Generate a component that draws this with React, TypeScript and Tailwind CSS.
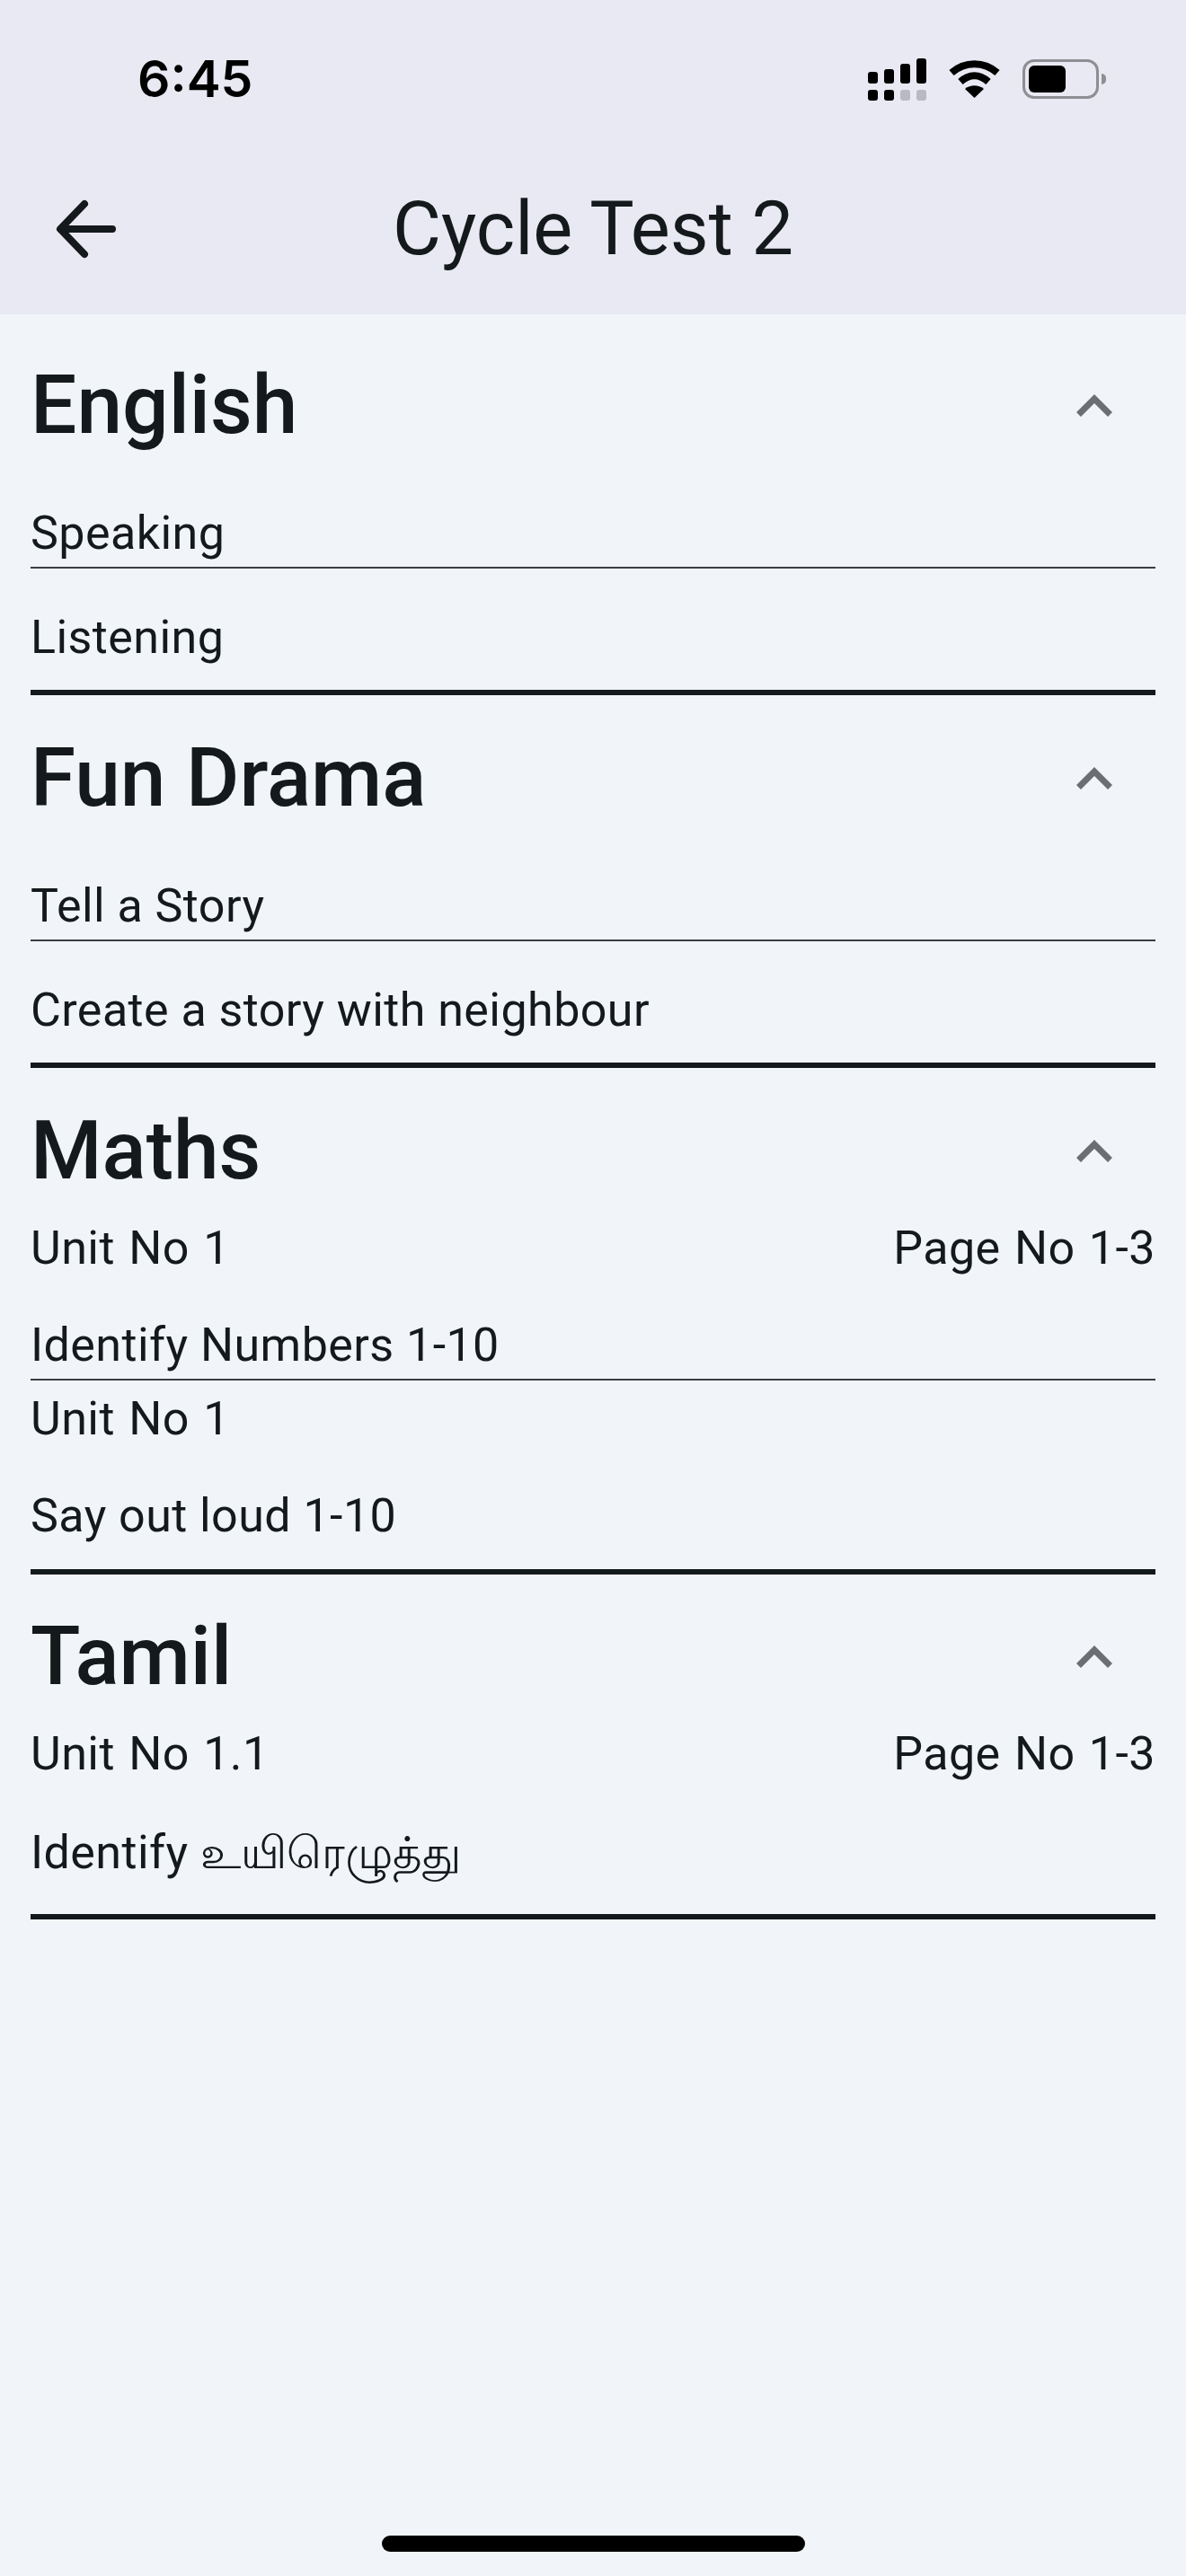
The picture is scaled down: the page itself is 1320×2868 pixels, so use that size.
import type { ReactNode } from "react";

const Chevron = () => (
  <svg width="40" height="25" viewBox="0 0 40 25" className="shrink-0">
    <path d="M2.5 22.5 L20 5 L37.5 22.5" fill="none" stroke="#6b6f72" strokeWidth="7" />
  </svg>
);

function Title({ text }: { text: string }) {
  return (
    <div className="flex items-center justify-between h-[112px] pr-[48px]">
      <h2 className="text-[91px] leading-[112px] font-medium text-[#14191c]">{text}</h2>
      <Chevron />
    </div>
  );
}

function UnitRow({ unit, page }: { unit: string; page?: string }) {
  return (
    <div className="flex justify-between text-[52px] leading-[64px] tracking-[0.44px] [word-spacing:2px] text-[#14191c]">
      <span>{unit}</span>
      {page && <span>{page}</span>}
    </div>
  );
}

function Row({ children, line }: { children: ReactNode; line?: boolean }) {
  return (
    <div className={line ? "border-b-2 border-[#3a3f42] pb-[5px]" : ""}>
      <div className="text-[52px] leading-[64px] tracking-[0.44px] text-[#14191c]">{children}</div>
    </div>
  );
}

function SignalIcon() {
  return (
    <svg width="65" height="47" viewBox="0 0 65 47">
      <rect x="0" y="15" width="11" height="13" rx="3" fill="#000" />
      <rect x="18" y="12" width="11" height="16" rx="3" fill="#000" />
      <rect x="36" y="6" width="11" height="22" rx="3" fill="#000" />
      <rect x="54" y="0" width="11" height="28" rx="3" fill="#000" />
      <rect x="0" y="35" width="11" height="12" rx="3" fill="#000" />
      <rect x="18" y="35" width="11" height="12" rx="3" fill="#000" />
      <rect x="36" y="35" width="11" height="12" rx="3" fill="#b9b9c3" />
      <rect x="54" y="35" width="11" height="12" rx="3" fill="#b9b9c3" />
    </svg>
  );
}

function WifiIcon() {
  return (
    <svg width="57" height="42" viewBox="0 0 57 42">
      <path d="M3 14 C18 1 39 1 54 14" fill="none" stroke="#000" strokeWidth="8" />
      <path d="M13 24 C23 15 34 15 44 24" fill="none" stroke="#000" strokeWidth="8" />
      <path d="M18 32 C24 27 33 27 39 32 L28.5 42 Z" fill="#000" />
    </svg>
  );
}

function BatteryIcon() {
  return (
    <div className="flex items-center">
      <div className="w-[85px] h-[44px] rounded-[13px] border-[3px] border-[#8e8e93] p-[4px]">
        <div className="h-full w-[41px] rounded-[6px] bg-black" />
      </div>
      <div className="w-[5px] h-[12px] ml-[3px] rounded-r-full bg-[#8e8e93]" />
    </div>
  );
}

export default function App() {
  return (
    <div className="w-[1320px] h-[2868px] bg-[#f1f4f9] flex flex-col font-['Roboto','Noto_Sans',sans-serif] relative">
      <header className="h-[350px] bg-[#e9e9f3] shrink-0 flex flex-col">
        <div className="flex items-center justify-between h-[176px] pl-[153px] pr-[89px]">
          <span className="text-[57px] font-semibold text-black font-['Inter',sans-serif]">6:45</span>
          <div className="flex items-center gap-[25px]">
            <SignalIcon />
            <WifiIcon />
            <BatteryIcon />
          </div>
        </div>
        <div className="relative flex items-center justify-center h-[158px]">
          <svg width="70" height="68" viewBox="0 0 70 68" className="absolute left-[60px] top-[45px]">
            <path d="M65 34 H8 M34 6 L7 34 L34 62" fill="none" stroke="#14191c" strokeWidth="8" strokeLinecap="round" strokeLinejoin="round" />
          </svg>
          <h1 className="text-[83px] leading-[100px] text-[#14191c]">Cycle Test 2</h1>
        </div>
      </header>
      <main className="flex flex-col px-[34px] pt-[45px]">
        <section className="border-b-[6px] border-[#14191c] pb-[26px]">
          <Title text="English" />
          <div className="mt-[55px]"><Row line>Speaking</Row></div>
          <div className="mt-[45px]"><Row>Listening</Row></div>
        </section>
        <section className="border-b-[6px] border-[#14191c] pb-[26px] pt-[36px]">
          <Title text="Fun Drama" />
          <div className="mt-[55px]"><Row line>Tell a Story</Row></div>
          <div className="mt-[45px]"><Row>Create a story with neighbour</Row></div>
        </section>
        <section className="border-b-[6px] border-[#14191c] pb-[27px] pt-[36px]">
          <Title text="Maths" />
          <div className="mt-[21px]"><UnitRow unit="Unit No 1" page="Page No 1-3" /></div>
          <div className="mt-[44px]"><Row line>Identify Numbers 1-10</Row></div>
          <div className="mt-[11px]"><UnitRow unit="Unit No 1" /></div>
          <div className="mt-[44px]"><Row>Say out loud 1-10</Row></div>
        </section>
        <section className="border-b-[6px] border-[#14191c] pb-[36px] pt-[35px]">
          <Title text="Tamil" />
          <div className="mt-[21px]"><UnitRow unit="Unit No 1.1" page="Page No 1-3" /></div>
          <div className="mt-[46px]">
            <Row>
              Identify <span className="text-[50px] tracking-normal">உயிரெழுத்து</span>
            </Row>
          </div>
        </section>
      </main>
      <div className="absolute bottom-[27px] left-[425px] w-[471px] h-[18px] rounded-[9px] bg-black" />
    </div>
  );
}
